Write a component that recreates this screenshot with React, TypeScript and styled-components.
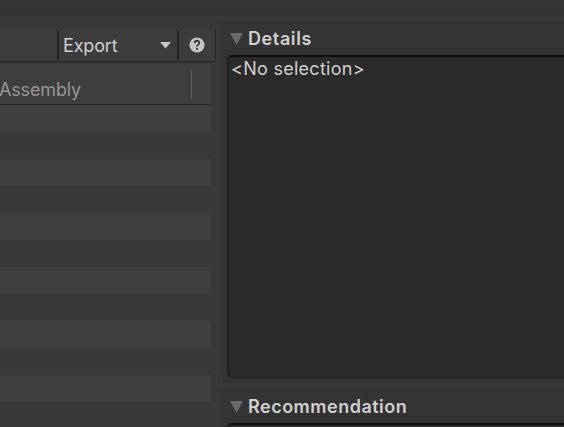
import React from "react";
import styled, { createGlobalStyle } from "styled-components";

const Global = createGlobalStyle`
  * { box-sizing: border-box; }
  body { margin: 0; overflow: hidden; background: #383838; }
`;

const Window = styled.div`
  width: 564px;
  height: 427px;
  overflow: hidden;
  display: flex;
  flex-direction: column;
  background: #383838;
  color: #d0d0d0;
  font: 18px/22px Inter, sans-serif;
  white-space: nowrap;
`;

const TopStrip = styled.div`
  flex: none;
  height: 15px;
  background: #333333;
`;

const Body = styled.div`
  flex: 1;
  min-height: 0;
  display: flex;
  gap: 6px;
`;

const ListColumn = styled.div`
  flex: none;
  width: 216px;
  padding-top: 15px;
`;

const Toolbar = styled.div`
  display: flex;
  height: 32px;
  padding-bottom: 1px;
  background: #3c3c3c;
  border-bottom: 1px solid #232323;
`;

const ToolbarItem = styled.div<{ $width: number; $edge: number }>`
  flex: none;
  width: ${(p) => p.$width}px;
  display: flex;
  align-items: center;
  justify-content: space-between;
  border-right: ${(p) => p.$edge}px solid #232323;
`;

const ExportItem = styled(ToolbarItem)`
  padding: 1px 6px 0 4px;
  letter-spacing: -0.15px;
`;

const HelpItem = styled(ToolbarItem)`
  justify-content: center;
`;

const Header = styled.div`
  display: flex;
  justify-content: space-between;
  width: 211px;
  height: 41px;
  margin-top: 2px;
  padding: 6px 19px 5px 0;
  background: #3e3e3e;
  border-bottom: 1px solid #222222;
  color: #959595;
`;

const HeaderLabel = styled.span`
  padding-top: 9px;
  margin-left: -1px;
  letter-spacing: -0.15px;
`;

const ColumnDivider = styled.div`
  width: 1px;
  height: 29px;
  background: #606060;
`;

const Row = styled.div<{ $alt: boolean }>`
  width: 211px;
  height: 27px;
  background: ${(p) => (p.$alt ? "#383838" : "#3f3f3f")};
`;

const Side = styled.div`
  flex: 1;
  min-width: 0;
  display: flex;
  flex-direction: column;
  gap: 5px;
  padding-top: 6px;
`;

const Panel = styled.section<{ $height: number }>`
  flex: none;
  height: ${(p) => p.$height}px;
  display: flex;
  flex-direction: column;
  padding: 0 0 5px 5px;
  background: #333333;
`;

const PanelTitle = styled.div<{ $height: number; $spacing: number }>`
  flex: none;
  height: ${(p) => p.$height}px;
  display: flex;
  align-items: center;
  gap: 5px;
  padding: ${(p) => p.$height - 32}px 0 0 3px;
  font-weight: 600;
  letter-spacing: ${(p) => p.$spacing}px;
`;

const TextBox = styled.div`
  flex: 1;
  margin-right: -8px;
  padding: 1px 2px;
  background: #2a2a2a;
  border: 2px solid #212121;
  border-top-color: #0e0e0e;
  border-bottom-width: 1px;
  border-radius: 5px;
  letter-spacing: 0.27px;
`;

const Foldout = () => (
  <svg width="13" height="12" viewBox="0 0 13 12">
    <path d="M0 0H13L6.5 12Z" fill="#696969" />
  </svg>
);

const Caret = () => (
  <svg width="11" height="7" viewBox="0 0 11 7">
    <path d="M0 0H11L5.5 6.5Z" fill="#c8c8c8" />
  </svg>
);

const HelpIcon = () => (
  <svg width="16" height="16" viewBox="0 0 16 16">
    <circle cx="8" cy="8" r="7.6" fill="#c4c4c4" />
    <path d="M5.7 6.1C5.7 3 10.3 3 10.3 5.9C10.3 7.7 8 7.6 8 9.6" fill="none" stroke="#393939" strokeWidth="1.8" />
    <rect x="7" y="10.8" width="2" height="2" fill="#393939" />
  </svg>
);

const rows = Array.from({ length: 12 }, (_, i) => i);

export default function App() {
  return (
    <Window>
      <Global />
      <TopStrip />
      <Body>
        <ListColumn>
          <Toolbar>
            <ToolbarItem $width={59} $edge={2} />
            <ExportItem $width={120} $edge={2}>
              Export
              <Caret />
            </ExportItem>
            <HelpItem $width={37} $edge={1}>
              <HelpIcon />
            </HelpItem>
          </Toolbar>
          <Header>
            <HeaderLabel>Assembly</HeaderLabel>
            <ColumnDivider />
          </Header>
          {rows.map((i) => (
            <Row key={i} $alt={i % 2 === 1} />
          ))}
        </ListColumn>
        <Side>
          <Panel $height={362}>
            <PanelTitle $height={34} $spacing={0.6}>
              <Foldout />
              Details
            </PanelTitle>
            <TextBox>&lt;No selection&gt;</TextBox>
          </Panel>
          <Panel $height={120}>
            <PanelTitle $height={35} $spacing={0.5}>
              <Foldout />
              Recommendation
            </PanelTitle>
            <TextBox />
          </Panel>
        </Side>
      </Body>
    </Window>
  );
}
